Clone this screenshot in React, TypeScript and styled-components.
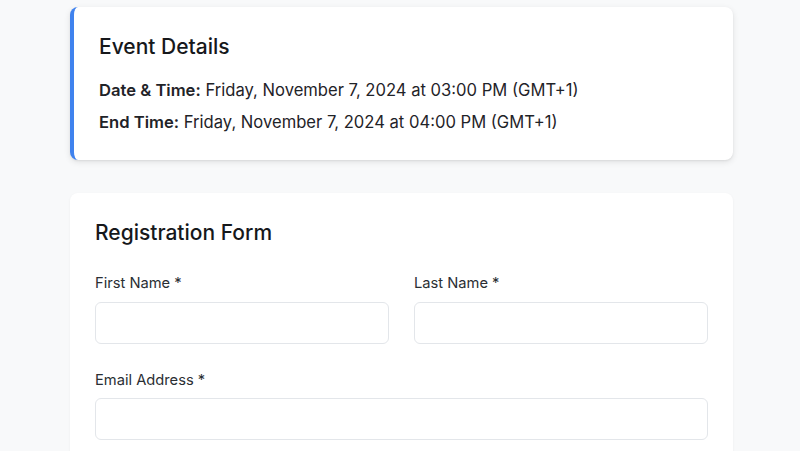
import { createGlobalStyle, styled } from "styled-components";

const GlobalStyle = createGlobalStyle`
    html, body {
        margin:0;
        padding:0;
        background:#f8f9fa;
        font-family:Inter, "Noto Sans", sans-serif;
        color:#1a1d21;
    }
    * { box-sizing:border-box; }
`

const Page = styled.div`
    width:663px;
    margin-left:70px;
    padding-top:7px;
    display:flex;
    flex-direction:column;
    gap:33px;
`
const Card = styled.section<{ $accent?: boolean }>`
    background:#fff;
    border-radius:8px;
    border-left:${props => (props.$accent ? "4px solid #3f82ee" : "none")};
    box-shadow:${props => (props.$accent
        ? "0 2px 6px rgba(0,0,0,0.10), 0 1px 2px rgba(0,0,0,0.06)"
        : "0 1px 3px rgba(0,0,0,0.05)")};
    padding:${props => (props.$accent ? "25px 24px 25px 25px" : "25px 25px 40px 25px")};
`
const Title = styled.h2<{ $gap: number }>`
    margin:0 0 ${props => props.$gap}px 0;
    font-size:21px;
    line-height:30px;
    font-weight:500;
    color:#16181b;
`
const InfoLine = styled.p`
    margin:0 0 7px 0;
    font-size:16.6px;
    line-height:25px;
    color:#1f2328;
    &:last-child{ margin-bottom:0; }
    strong{ font-weight:600; }
`
const FormGrid = styled.div`
    display:grid;
    grid-template-columns:1fr 1fr;
    column-gap:25px;
    row-gap:26px;
`
const Field = styled.div<{ $wide?: boolean }>`
    display:flex;
    flex-direction:column;
    gap:7.5px;
    grid-column:${props => (props.$wide ? "1 / -1" : "auto")};
`
const Label = styled.label`
    font-size:14.7px;
    line-height:21px;
    color:#2a2e33;
`
const Input = styled.input`
    height:42px;
    width:100%;
    border:1px solid #e3e6ea;
    border-radius:6px;
    background:#fff;
    padding:0 12px;
    font-family:inherit;
    font-size:14px;
    outline:none;
`

export default function App() {
    return (
        <>
            <GlobalStyle />
            <Page>
                <Card $accent>
                    <Title $gap={16}>Event Details</Title>
                    <InfoLine><strong>Date &amp; Time:</strong> Friday, November 7, 2024 at 03:00 PM (GMT+1)</InfoLine>
                    <InfoLine><strong>End Time:</strong> Friday, November 7, 2024 at 04:00 PM (GMT+1)</InfoLine>
                </Card>
                <Card>
                    <Title $gap={25}>Registration Form</Title>
                    <FormGrid>
                        <Field>
                            <Label>First Name *</Label>
                            <Input type="text" />
                        </Field>
                        <Field>
                            <Label>Last Name *</Label>
                            <Input type="text" />
                        </Field>
                        <Field $wide>
                            <Label>Email Address *</Label>
                            <Input type="email" />
                        </Field>
                    </FormGrid>
                </Card>
            </Page>
        </>
    )
}
